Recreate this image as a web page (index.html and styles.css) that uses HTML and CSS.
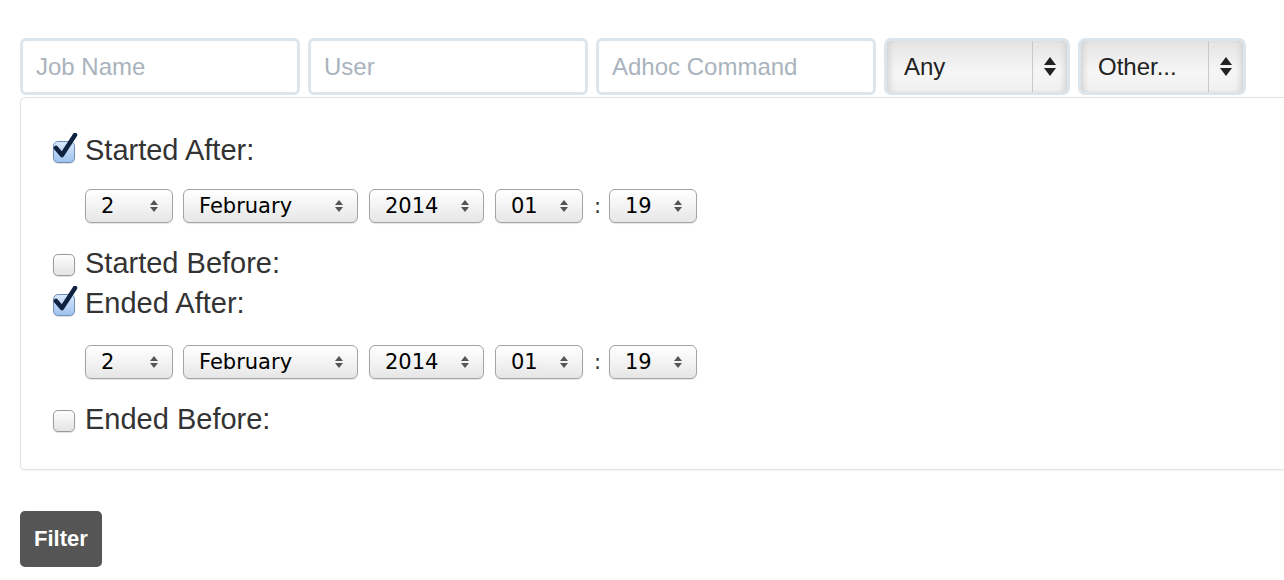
FILE: index.html
```html
<!DOCTYPE html>
<html>
<head>
<meta charset="utf-8">
<link rel="stylesheet" href="styles.css">
</head>
<body>
<div class="page">
  <div class="toolbar">
    <div class="field"><span class="ph">Job Name</span></div>
    <div class="field"><span class="ph">User</span></div>
    <div class="field"><span class="ph">Adhoc Command</span></div>
    <div class="bigsel w-any">
      <span class="bigsel-text">Any</span>
      <span class="bigsel-arrow"><svg width="14" height="24" viewBox="0 0 14 24"><path d="M7 2 L13 10 L1 10 Z M1 13 L13 13 L7 21 Z" fill="#222"/></svg></span>
    </div>
    <div class="bigsel w-other">
      <span class="bigsel-text">Other...</span>
      <span class="bigsel-arrow"><svg width="14" height="24" viewBox="0 0 14 24"><path d="M7 2 L13 10 L1 10 Z M1 13 L13 13 L7 21 Z" fill="#222"/></svg></span>
    </div>
  </div>

  <div class="panel">
    <div class="opt">
      <span class="cb checked"><svg width="26" height="28" viewBox="0 0 26 28"><path d="M4 15 L10 22 L23 2" fill="none" stroke="#0f2340" stroke-width="4.5" stroke-linecap="round" stroke-linejoin="round"/></svg></span>
      <span class="lbl">Started After:</span>
    </div>
    <div class="daterow">
      <div class="sel w88"><span>2</span><svg class="ar" width="10" height="14" viewBox="0 0 10 14"><path d="M5 1 L9 6 L1 6 Z M1 8 L9 8 L5 13 Z" fill="#555"/></svg></div>
      <div class="sel w175"><span>February</span><svg class="ar" width="10" height="14" viewBox="0 0 10 14"><path d="M5 1 L9 6 L1 6 Z M1 8 L9 8 L5 13 Z" fill="#555"/></svg></div>
      <div class="sel w115"><span>2014</span><svg class="ar" width="10" height="14" viewBox="0 0 10 14"><path d="M5 1 L9 6 L1 6 Z M1 8 L9 8 L5 13 Z" fill="#555"/></svg></div>
      <div class="sel w88"><span>01</span><svg class="ar" width="10" height="14" viewBox="0 0 10 14"><path d="M5 1 L9 6 L1 6 Z M1 8 L9 8 L5 13 Z" fill="#555"/></svg></div>
      <span class="colon">:</span>
      <div class="sel w88"><span>19</span><svg class="ar" width="10" height="14" viewBox="0 0 10 14"><path d="M5 1 L9 6 L1 6 Z M1 8 L9 8 L5 13 Z" fill="#555"/></svg></div>
    </div>
    <div class="opt">
      <span class="cb"></span>
      <span class="lbl">Started Before:</span>
    </div>
    <div class="opt">
      <span class="cb checked"><svg width="26" height="28" viewBox="0 0 26 28"><path d="M4 15 L10 22 L23 2" fill="none" stroke="#0f2340" stroke-width="4.5" stroke-linecap="round" stroke-linejoin="round"/></svg></span>
      <span class="lbl">Ended After:</span>
    </div>
    <div class="daterow second">
      <div class="sel w88"><span>2</span><svg class="ar" width="10" height="14" viewBox="0 0 10 14"><path d="M5 1 L9 6 L1 6 Z M1 8 L9 8 L5 13 Z" fill="#555"/></svg></div>
      <div class="sel w175"><span>February</span><svg class="ar" width="10" height="14" viewBox="0 0 10 14"><path d="M5 1 L9 6 L1 6 Z M1 8 L9 8 L5 13 Z" fill="#555"/></svg></div>
      <div class="sel w115"><span>2014</span><svg class="ar" width="10" height="14" viewBox="0 0 10 14"><path d="M5 1 L9 6 L1 6 Z M1 8 L9 8 L5 13 Z" fill="#555"/></svg></div>
      <div class="sel w88"><span>01</span><svg class="ar" width="10" height="14" viewBox="0 0 10 14"><path d="M5 1 L9 6 L1 6 Z M1 8 L9 8 L5 13 Z" fill="#555"/></svg></div>
      <span class="colon">:</span>
      <div class="sel w88"><span>19</span><svg class="ar" width="10" height="14" viewBox="0 0 10 14"><path d="M5 1 L9 6 L1 6 Z M1 8 L9 8 L5 13 Z" fill="#555"/></svg></div>
    </div>
    <div class="opt">
      <span class="cb"></span>
      <span class="lbl">Ended Before:</span>
    </div>
  </div>

  <button class="filter">Filter</button>
</div>
</body>
</html>
```

FILE: styles.css
```css
html, body {
  margin: 0;
  padding: 0;
  background: #fff;
  overflow: hidden;
}
.page {
  padding: 38px 0 0 20px;
  font-family: "Liberation Sans", Arial, sans-serif;
  width: 1300px;
}
.toolbar {
  display: flex;
  gap: 8px;
  height: 57px;
}
.field {
  box-sizing: border-box;
  width: 280px;
  height: 57px;
  border: 3px solid #dce4ec;
  border-radius: 6px;
  background: #fff;
  display: flex;
  align-items: center;
  padding-left: 13px;
}
.ph {
  font-size: 24px;
  color: #a9b3bd;
}
.bigsel {
  box-sizing: border-box;
  height: 57px;
  border: 3px solid #dce4ec;
  border-radius: 7px;
  background: linear-gradient(#e4e4e4, #f6f6f6 60%, #f0f0f0);
  box-shadow: inset 6px 0 6px -4px #cfcfcf, inset -6px 0 6px -4px #cfcfcf;
  display: flex;
  align-items: stretch;
}
.w-any { width: 186px; }
.w-other { width: 168px; }
.bigsel-text {
  flex: 1;
  display: flex;
  align-items: center;
  padding-left: 17px;
  font-size: 24px;
  color: #222;
  border-right: 1px solid #c8c8c8;
}
.bigsel-arrow {
  width: 34px;
  display: flex;
  align-items: center;
  justify-content: center;
}
.panel {
  box-sizing: border-box;
  margin-top: 2px;
  width: 1290px;
  border: 1px solid #e3e3e3;
  border-radius: 5px;
  box-shadow: 0 1px 2px rgba(0,0,0,0.06);
  padding: 32px 0 30px 32px;
}
.opt {
  display: flex;
  align-items: center;
  height: 40px;
}
.cb {
  box-sizing: border-box;
  width: 22px;
  height: 22px;
  border: 1px solid #9a9a9a;
  border-radius: 5px;
  background: linear-gradient(#fdfdfd, #e4e4e4);
  box-shadow: 0 1px 1px rgba(0,0,0,0.12);
  position: relative;
  margin-top: 3px;
  flex: none;
}
.cb.checked {
  border-color: #6f8fb8;
  background: linear-gradient(#d8e8fb, #9fc2ee);
}
.cb svg {
  position: absolute;
  left: -2px;
  top: -9px;
}
.lbl {
  margin-left: 10px;
  font-size: 29px;
  color: #333;
}
.daterow {
  display: flex;
  align-items: center;
  gap: 11px;
  margin: 19px 0 20px 32px;
  height: 34px;
}
.daterow.second {
  margin-top: 22px;
}
.daterow .sel:first-child { margin-right: -1px; }
.sel {
  box-sizing: border-box;
  height: 34px;
  border: 1px solid #a3a3a3;
  border-radius: 6px;
  background: linear-gradient(#ffffff, #f3f3f3 50%, #e6e6e6);
  box-shadow: 0 1px 1px rgba(0,0,0,0.1);
  display: flex;
  align-items: center;
  justify-content: space-between;
  padding: 0 13px 0 15px;
  font-family: "DejaVu Sans", Verdana, sans-serif;
  font-size: 21px;
  color: #000;
}
.w88 { width: 88px; }
.w175 { width: 175px; }
.w115 { width: 115px; }
.colon {
  font-family: "DejaVu Sans", Verdana, sans-serif;
  font-size: 21px;
  color: #333;
  width: 4px;
  text-align: center;
}
.filter {
  margin-top: 41px;
  height: 56px;
  padding: 0 14px;
  background: #555;
  color: #fff;
  border: none;
  border-radius: 5px;
  font-family: "Liberation Sans", Arial, sans-serif;
  font-weight: bold;
  font-size: 22px;
  display: block;
}
```
